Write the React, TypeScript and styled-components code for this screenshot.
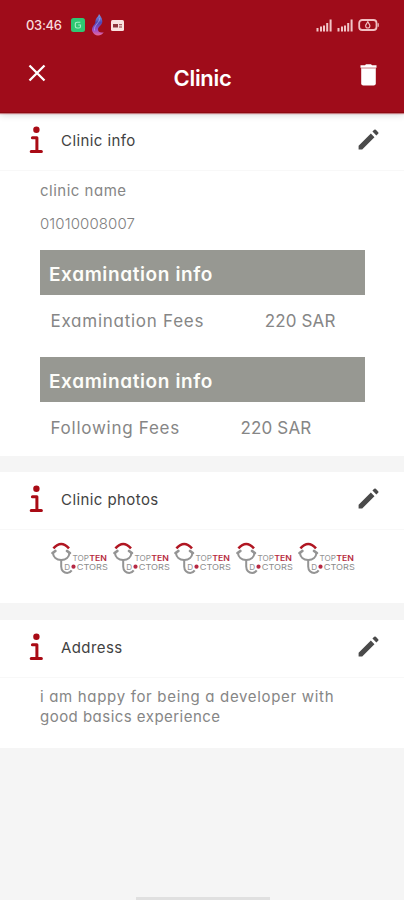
import React from 'react';
import styled, { createGlobalStyle } from 'styled-components';

const GlobalStyle = createGlobalStyle`
  *, *::before, *::after { box-sizing: border-box; }
  body {
    margin: 0;
    background: #f5f5f5;
    font-family: Inter, 'Noto Sans', sans-serif;
    font-feature-settings: 'cv11';
  }
  svg { display: block; flex: none; }
`;

const Screen = styled.div`
  display: flex;
  flex-direction: column;
  height: 900px;
  overflow: hidden;
`;

const Header = styled.header`
  height: 113px;
  flex: none;
  background: #9f0c1a;
  border-bottom: 1px solid #8d0810;
  box-shadow: 0 1px 1px rgba(159, 12, 26, 0.5), 0 2px 7px rgba(0, 0, 0, 0.16);
  color: #fff;
  z-index: 1;
`;

const StatusBar = styled.div`
  display: flex;
  align-items: center;
  height: 50px;
  padding: 0 25px 0 26px;
`;

const Time = styled.span`
  width: 45px;
  font-size: 13px;
  font-weight: 500;
  letter-spacing: -0.3px;
  color: #f8dcdc;
`;

const StatusGroup = styled.div<{ $gap: number; $end?: boolean }>`
  display: flex;
  align-items: center;
  gap: ${p => p.$gap}px;
  margin-left: ${p => (p.$end ? 'auto' : '0')};
`;

const TitleBar = styled.div`
  display: grid;
  grid-template-columns: 40px 1fr 40px;
  align-items: start;
  padding: 12px 17px 0;
`;

const IconButton = styled.button<{ $right?: boolean }>`
  display: flex;
  justify-content: ${p => (p.$right ? 'flex-end' : 'flex-start')};
  padding: ${p => (p.$right ? '2px 10px 0 0' : '2px 0 0 11px')};
  border: 0;
  background: none;
`;

const Title = styled.h1`
  margin: 2px 0 0 1px;
  text-align: center;
  font-size: 22px;
  line-height: 28px;
  font-weight: 600;
  letter-spacing: -0.3px;
`;

const Card = styled.section<{ $height: number; $gap?: number }>`
  height: ${p => p.$height}px;
  margin-bottom: ${p => p.$gap ?? 0}px;
  flex: none;
  background: #fff;
`;

const CardHeader = styled.div`
  display: flex;
  align-items: center;
  height: 58px;
  padding: 0 22px 4px 28px;
  border-bottom: 1px solid #f8f8f8;
`;

const CardTitle = styled.h2`
  flex: 1;
  margin: 1px 0 0 18px;
  color: #424242;
  font-size: 15px;
  font-weight: 400;
  letter-spacing: 0.42px;
`;

const Body = styled.div<{ $top: number }>`
  padding: ${p => p.$top}px 39px 0 40px;
`;

const Line = styled.p<{ $light?: boolean }>`
  margin: 0 0 ${p => (p.$light ? 16 : 13)}px;
  font-size: 15px;
  line-height: 20px;
  color: ${p => (p.$light ? '#808080' : '#868686')};
  font-weight: ${p => (p.$light ? 300 : 400)};
  letter-spacing: ${p => (p.$light ? 0.1 : 0.5)}px;
`;

const Banner = styled.div`
  height: 45px;
  padding: 2px 0 0 9px;
  background: #979892;
  color: #fdfdf9;
  font-size: 19px;
  line-height: 46px;
  font-weight: 600;
  letter-spacing: 0.62px;
`;

const FeeRow = styled.div`
  display: flex;
  gap: 60.5px;
  height: 62px;
  padding: 13px 0 0 10.5px;
  color: #868686;
  font-size: 17px;
  line-height: 27px;
`;

const FeeName = styled.span`
  letter-spacing: 0.74px;
`;

const FeeValue = styled.span`
  letter-spacing: 0.15px;
`;

const Photos = styled.div`
  display: flex;
  gap: 3.7px;
  padding: 12px 0 0 51px;
`;

const Address = styled.p`
  margin: 0;
  color: #868686;
  font-size: 15px;
  line-height: 20px;
`;

const AddressLine = styled.span<{ $spacing: number }>`
  display: block;
  white-space: nowrap;
  letter-spacing: ${p => p.$spacing}px;
`;

const HomeIndicator = styled.div`
  width: 134px;
  height: 3px;
  margin: auto 0 0 136px;
  background: #e0e0e0;
`;

const ChatAppIcon = () => (
  <svg width="14" height="14" viewBox="0 0 14 14">
    <rect width="14" height="14" rx="2.5" fill="#2fc873" />
    <path d="M9.3 4.2H6.2Q4.3 4.2 4.3 6.2V8.3Q4.3 10 6 10H8Q9.5 10 9.5 8.5V7H7.2" fill="none" stroke="#a5efc5" strokeWidth="1.1" />
  </svg>
);

const FeatherIcon = () => (
  <svg width="14" height="24" viewBox="0 0 14 24">
    <defs>
      <linearGradient id="feather" x1="0" y1="0" x2="0" y2="1">
        <stop offset="0" stopColor="#7d9fe2" />
        <stop offset="0.4" stopColor="#4f46b4" />
        <stop offset="0.75" stopColor="#a04cc6" />
        <stop offset="1" stopColor="#e8689b" />
      </linearGradient>
    </defs>
    <path d="M8 1C9.5 3 11.9 6 11.2 9.5C10.2 13 7 13.8 7 16.5C7 18.7 9 20 12.7 19.2C10.5 22.5 6.5 23.6 3.4 21.2C-.3 18 .9 14.2 3.2 11.8C5 9.7 3.8 8.6 5 6C5.8 4.2 7.6 3.3 8 1Z" fill="url(#feather)" />
    <path d="M8.8 5C8.8 10 2.5 12 3.5 17.5" stroke="#b3a8ee" strokeWidth=".7" fill="none" />
  </svg>
);

const CardIcon = () => (
  <svg width="13" height="11" viewBox="0 0 13 11">
    <rect width="13" height="11" rx="1.5" fill="#f9e2df" />
    <path d="M2 4H7V7.5H2ZM8 4.2H11V5.2H8ZM8 6.4H11V7.4H8Z" fill="#8e343b" />
  </svg>
);

const SignalIcon = () => (
  <svg width="16" height="13" viewBox="0 0 16 13">
    <path d="M1.5 9V12.5M5 7.5V12.5M8 6.5V12.5M11.2 4V12.5M14.6 .5V12.5" stroke="#f1c5c7" strokeWidth="2" />
  </svg>
);

const BatteryIcon = () => (
  <svg width="21" height="12" viewBox="0 0 21 12">
    <rect x="1.2" y="1" width="17.3" height="10" rx="3" fill="none" stroke="#f1bfc2" strokeWidth="1.8" />
    <path d="M20.2 4.3V7.7" stroke="#f1bfc2" strokeWidth="1.2" />
    <path d="M9.8 2.8L7.7 6.3Q7.5 9 9.8 9Q12.1 9 11.8 6.3Z" fill="none" stroke="#f1bfc2" strokeWidth="1.2" />
  </svg>
);

const CloseIcon = () => (
  <svg width="18" height="18" viewBox="0 0 18 18">
    <path d="M1.5 1.5L16.5 16.5M16.5 1.5L1.5 16.5" stroke="#fff" strokeWidth="2.3" />
  </svg>
);

const TrashIcon = () => (
  <svg width="17" height="22" viewBox="0 0 17 22">
    <path d="M.5 1.2H5L6 .2H11L12 1.2H16.5V3.7H.5Z" fill="#fff" />
    <path d="M1.2 4.2H15.8V19.5Q15.8 21.6 13.7 21.6H3.3Q1.2 21.6 1.2 19.5Z" fill="#fff" />
    <path d="M1 4.4H16" stroke="#e5b8bc" strokeWidth=".7" />
  </svg>
);

const InfoIcon = () => (
  <svg width="15" height="28" viewBox="0 0 15 28">
    <circle cx="8.4" cy="3.7" r="3.2" fill="#a90b15" />
    <path d="M4.4 11.8H8.9V25M3.2 25.4H13.4" fill="none" stroke="#a90b15" strokeWidth="3" strokeLinejoin="round" strokeLinecap="round" />
  </svg>
);

const PencilIcon = () => (
  <svg width="27" height="27" viewBox="0 0 24 24">
    <path d="M3.2 17.6V20.8H6.4L17.3 9.9L14.1 6.7ZM20.6 6.9a.996.996 0 0 0 0-1.41l-2.1-2.1a.996.996 0 0 0-1.41 0l-1.6 1.6 3.5 3.5 1.6-1.6z" fill="#4a4a4a" />
  </svg>
);

const DoctorsLogo = () => (
  <svg width="58" height="33" viewBox="0 0 58 33" fontFamily="Inter, sans-serif">
    <path d="M2.4 6.3Q10.2 -2.4 18 6.3" fill="none" stroke="#b01622" strokeWidth="2.5" />
    <g fill="none" stroke="#949494" strokeWidth="2">
      <path d="M2 10.5C2 15.3 5.5 18 10.2 18S18.4 15.3 18.4 10.5" />
      <path d="M10.2 18V24.5C10.2 28.5 13 31 16.2 31Q19 31 20.7 28.4" />
    </g>
    <path d="M1.6 11L4.3 9M18.8 11L16.1 9" stroke="#949494" strokeWidth="2.8" strokeLinecap="round" />
    <text x="21.5" y="19.3" fontSize="7.6" fill="#929292" textLength="16.5" lengthAdjust="spacingAndGlyphs">TOP</text>
    <text x="38.3" y="19.3" fontSize="7.6" fontWeight="600" fill="#b72b40" textLength="17.7" lengthAdjust="spacingAndGlyphs">TEN</text>
    <text x="13.2" y="27.6" fontSize="8.2" fill="#909090">D</text>
    <circle cx="22.5" cy="24.7" r="2.1" fill="#b62843" />
    <text x="25.8" y="27.6" fontSize="8" fill="#8c8c8c" textLength="31" lengthAdjust="spacingAndGlyphs">CTORS</text>
  </svg>
);

const SectionHeader = ({ title }: { title: string }) => (
  <CardHeader>
    <InfoIcon />
    <CardTitle>{title}</CardTitle>
    <PencilIcon />
  </CardHeader>
);

const fees = [
  { name: 'Examination Fees', value: '220 SAR' },
  { name: 'Following Fees', value: '220 SAR' },
];

export default function App() {
  return (
    <Screen>
      <GlobalStyle />
      <Header>
        <StatusBar>
          <Time>03:46</Time>
          <StatusGroup $gap={6}>
            <ChatAppIcon />
            <FeatherIcon />
            <CardIcon />
          </StatusGroup>
          <StatusGroup $gap={5} $end>
            <SignalIcon />
            <SignalIcon />
            <BatteryIcon />
          </StatusGroup>
        </StatusBar>
        <TitleBar>
          <IconButton aria-label="Close"><CloseIcon /></IconButton>
          <Title>Clinic</Title>
          <IconButton aria-label="Delete" $right><TrashIcon /></IconButton>
        </TitleBar>
      </Header>

      <Card $height={343} $gap={16}>
        <SectionHeader title="Clinic info" />
        <Body $top={10}>
          <Line>clinic name</Line>
          <Line $light>01010008007</Line>
          {fees.map(fee => (
            <React.Fragment key={fee.name}>
              <Banner>Examination info</Banner>
              <FeeRow>
                <FeeName>{fee.name}</FeeName>
                <FeeValue>{fee.value}</FeeValue>
              </FeeRow>
            </React.Fragment>
          ))}
        </Body>
      </Card>

      <Card $height={131} $gap={17}>
        <SectionHeader title="Clinic photos" />
        <Photos>
          {[0, 1, 2, 3, 4].map(i => <DoctorsLogo key={i} />)}
        </Photos>
      </Card>

      <Card $height={128}>
        <SectionHeader title="Address" />
        <Body $top={9}>
          <Address>
            <AddressLine $spacing={0.68}>i am happy for being a developer with</AddressLine>
            <AddressLine $spacing={0.47}>good basics experience</AddressLine>
          </Address>
        </Body>
      </Card>

      <HomeIndicator />
    </Screen>
  );
}
